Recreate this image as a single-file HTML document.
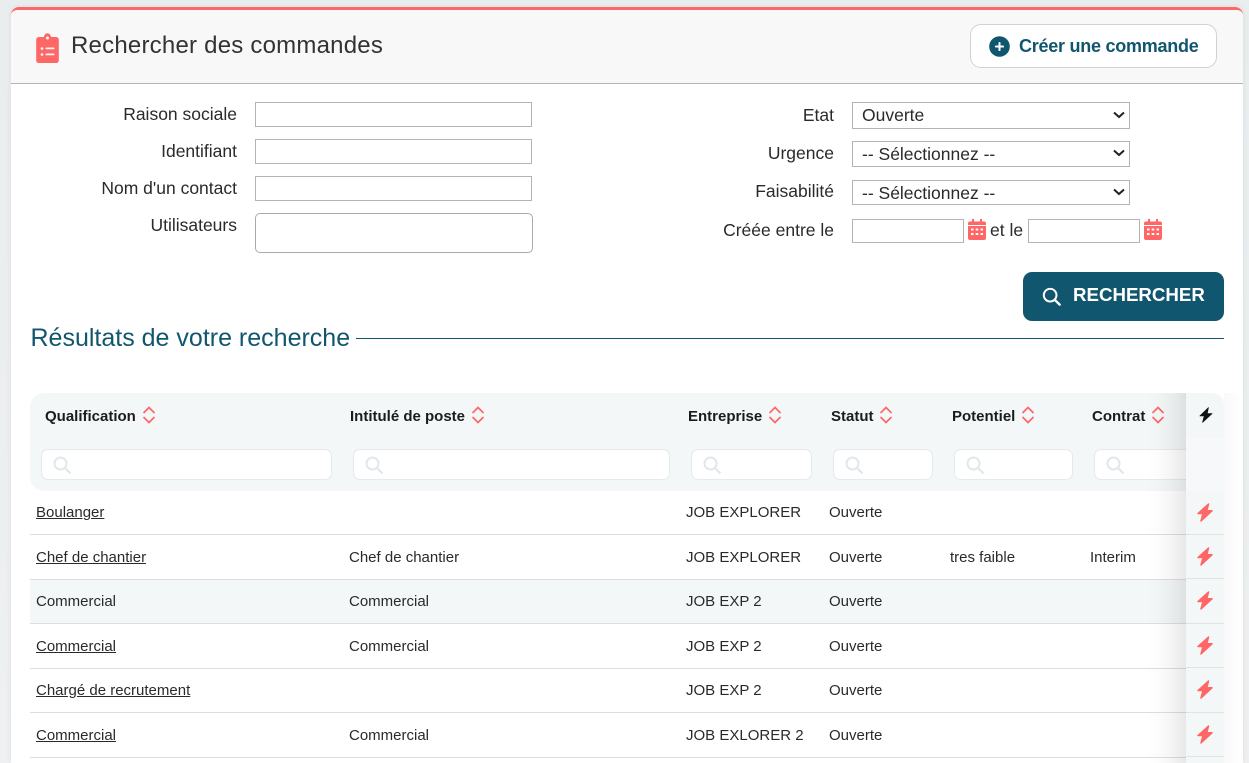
<!DOCTYPE html>
<html lang="fr"><head><meta charset="utf-8"><title>Rechercher des commandes</title>
<style>
*{box-sizing:border-box}
html,body{margin:0;padding:0;width:1249px;height:763px;overflow:hidden;background:#e9edee;font-family:"Liberation Sans",sans-serif;color:#222}
#root{position:relative;width:1249px;height:763px;overflow:hidden;background:linear-gradient(180deg,#e9edee,#eef0f1)}
.a{position:absolute;white-space:nowrap}
#card{position:absolute;left:11px;top:7px;width:1232px;height:756px;background:#fff;border-top:3px solid #ff6666;border-radius:8px 8px 0 0;box-shadow:0 0 6px rgba(0,0,0,.07)}
#head{position:absolute;left:11px;top:10px;width:1232px;height:74px;background:#f8f8f8;border-bottom:1px solid #b5b5b5;border-radius:6px 6px 0 0}
.lb{font-size:17.5px;line-height:20px;text-align:right;right:1012px;color:#2a2a2a}
.lb2{font-size:17.5px;line-height:20px;text-align:right;right:415px;color:#2a2a2a}
.in{position:absolute;background:#fff;border:1px solid #b3b3b3}
.sel{position:absolute;left:852px;width:278px;background:#fff;border:1px solid #b3b3b3;font-size:17.5px;padding-left:9px;color:#2a2a2a}
.sel svg{position:absolute;right:4px;top:50%;margin-top:-5px}
.th{font-size:15px;font-weight:bold;color:#1c1c1c;top:408px;line-height:18px}
.fi{position:absolute;top:449px;height:31px;background:#fff;border:1px solid #e3eaed;border-radius:7px}
.fi svg{position:absolute;left:11px;top:6px}
.td{font-size:15px;line-height:18px;color:#2a2a2a}
.ln{position:absolute;left:30px;width:1156px;height:1px;background:#dedede}
.bolt{position:absolute;left:1197px}
</style></head><body><div id="root">
<div id="card"></div>
<div id="head"></div>

<svg class="a" style="left:36px;top:33px" width="23" height="30" viewBox="0 0 23 30"><path fill="#ff6666" d="M3 4h4.800C8.400 1.700 9.700 .2 11.500 .2S14.600 1.700 15.200 4H20c1.600 0 2.800 1.200 2.800 2.800v20.400c0 1.600-1.200 2.800-2.800 2.800H3c-1.600 0-2.800-1.200-2.800-2.800V6.800C.2 5.200 1.400 4 3 4z"/><circle cx="11.500" cy="5" r="1.500" fill="#f8f8f8"/><g fill="#f8f8f8"><circle cx="6" cy="15.500" r="1.300"/><circle cx="6" cy="21.500" r="1.300"/><rect x="9.500" y="14.500" width="9" height="1.800" rx=".8"/><rect x="9.500" y="20.500" width="9" height="1.800" rx=".8"/></g></svg>
<div class="a" style="left:71px;top:31px;font-size:24px;line-height:30px;color:#333;letter-spacing:.22px">Rechercher des commandes</div>

<div class="a" style="left:970px;top:24px;width:247px;height:44px;background:#fff;border:1px solid #d2d2d2;border-radius:11px"></div>
<svg class="a" style="left:989px;top:36px" width="21" height="21" viewBox="0 0 21 21"><circle cx="10.500" cy="10.500" r="10.300" fill="#11566f"/><rect x="6" y="9.500" width="9" height="2" rx=".8" fill="#fff"/><rect x="9.500" y="6" width="2" height="9" rx=".8" fill="#fff"/></svg>
<div class="a" style="left:1019px;top:35px;font-size:18px;line-height:23px;font-weight:bold;color:#11566f;letter-spacing:-.25px">Créer une commande</div>

<div class="a lb" style="top:104px">Raison sociale</div>
<div class="a lb" style="top:141px">Identifiant</div>
<div class="a lb" style="top:178px">Nom d'un contact</div>
<div class="a lb" style="top:215px">Utilisateurs</div>
<div class="in" style="left:255px;top:102px;width:277px;height:25px"></div>
<div class="in" style="left:255px;top:139px;width:277px;height:25px"></div>
<div class="in" style="left:255px;top:176px;width:277px;height:25px"></div>
<div class="in" style="left:255px;top:213px;width:278px;height:40px;border-radius:5px;border-color:#aaa"></div>

<div class="a lb2" style="top:105px">Etat</div>
<div class="a lb2" style="top:143px">Urgence</div>
<div class="a lb2" style="top:181px">Faisabilité</div>
<div class="a lb2" style="top:220px">Créée entre le</div>

<div class="sel" style="top:102px;height:27px;line-height:24px">Ouverte<svg width="12" height="8" viewBox="0 0 12 8"><path d="M1 1.500l5 4.500 5-4.500" fill="none" stroke="#222" stroke-width="2"/></svg></div>
<div class="sel" style="top:141px;height:26px;line-height:24px">-- Sélectionnez --<svg width="12" height="8" viewBox="0 0 12 8"><path d="M1 1.500l5 4.500 5-4.500" fill="none" stroke="#222" stroke-width="2"/></svg></div>
<div class="sel" style="top:180px;height:25px;line-height:24px">-- Sélectionnez --<svg width="12" height="8" viewBox="0 0 12 8"><path d="M1 1.500l5 4.500 5-4.500" fill="none" stroke="#222" stroke-width="2"/></svg></div>

<div class="in" style="left:852px;top:219px;width:112px;height:24px"></div>
<svg class="a" style="left:968px;top:219px" width="18" height="21" viewBox="0 0 18 21"><path fill="#ff6666" d="M4 0h2v2.500h6V0h2v2.500h2.300c.9 0 1.700.8 1.700 1.700V6H0V4.200c0-.9.800-1.700 1.700-1.700H4z"/><path fill="#ff6666" fill-rule="evenodd" d="M0 7h18v12.300c0 .9-.8 1.700-1.700 1.700H1.700C.8 21 0 20.200 0 19.300zM3 9.500v2h2.500v-2zm4.700 0v2h2.600v-2zm4.800 0v2H15v-2zM3 14v2h2.500v-2zm4.700 0v2h2.600v-2zm4.800 0v2H15v-2z"/></svg>
<div class="a" style="left:990px;top:220px;font-size:17.5px;line-height:20px;color:#2a2a2a">et le</div>
<div class="in" style="left:1028px;top:219px;width:112px;height:24px"></div>
<svg class="a" style="left:1144px;top:219px" width="18" height="21" viewBox="0 0 18 21"><path fill="#ff6666" d="M4 0h2v2.500h6V0h2v2.500h2.300c.9 0 1.700.8 1.700 1.700V6H0V4.200c0-.9.800-1.700 1.700-1.700H4z"/><path fill="#ff6666" fill-rule="evenodd" d="M0 7h18v12.300c0 .9-.8 1.700-1.700 1.700H1.700C.8 21 0 20.200 0 19.300zM3 9.500v2h2.500v-2zm4.700 0v2h2.600v-2zm4.800 0v2H15v-2zM3 14v2h2.500v-2zm4.700 0v2h2.600v-2zm4.800 0v2H15v-2z"/></svg>

<div class="a" style="left:1023px;top:272px;width:201px;height:49px;background:#11566f;border-radius:9px"></div>
<svg class="a" style="left:1042px;top:287px" width="19" height="19" viewBox="0 0 21 21"><circle cx="9" cy="9" r="7" fill="none" stroke="#fff" stroke-width="2.200"/><path d="M14 14l5.500 5.500" stroke="#fff" stroke-width="2.600" stroke-linecap="round"/></svg>
<div class="a" style="left:1073px;top:284px;font-size:18.7px;line-height:22px;font-weight:bold;color:#fff">RECHERCHER</div>

<div class="a" style="left:30.500px;top:323px;font-size:25px;line-height:30px;color:#11566f">Résultats de votre recherche</div>
<div class="a" style="left:356px;top:338px;width:868px;height:1px;background:#11566f"></div>

<!-- table -->
<div class="a" style="left:30px;top:393px;width:1156px;height:98px;background:#f4f7f8;border-radius:14px 0 0 14px"></div>
<div class="a" style="left:30px;top:580px;width:1156px;height:43px;background:#f4f7f8"></div>

<div class="a th" style="left:45px">Qualification</div>
<div class="a th" style="left:350px">Intitulé de poste</div>
<div class="a th" style="left:688px">Entreprise</div>
<div class="a th" style="left:831px">Statut</div>
<div class="a th" style="left:952px">Potentiel</div>
<div class="a th" style="left:1092px">Contrat</div>
<svg class="a" style="left:142px;top:406px" width="14" height="18" viewBox="0 0 14 18"><path d="M1.500 7L7 1.500 12.500 7M1.500 11L7 16.500 12.500 11" fill="none" stroke="#ff6666" stroke-width="1.700"/></svg>
<svg class="a" style="left:471px;top:406px" width="14" height="18" viewBox="0 0 14 18"><path d="M1.500 7L7 1.500 12.500 7M1.500 11L7 16.500 12.500 11" fill="none" stroke="#ff6666" stroke-width="1.700"/></svg>
<svg class="a" style="left:768px;top:406px" width="14" height="18" viewBox="0 0 14 18"><path d="M1.500 7L7 1.500 12.500 7M1.500 11L7 16.500 12.500 11" fill="none" stroke="#ff6666" stroke-width="1.700"/></svg>
<svg class="a" style="left:879px;top:406px" width="14" height="18" viewBox="0 0 14 18"><path d="M1.500 7L7 1.500 12.500 7M1.500 11L7 16.500 12.500 11" fill="none" stroke="#ff6666" stroke-width="1.700"/></svg>
<svg class="a" style="left:1021px;top:406px" width="14" height="18" viewBox="0 0 14 18"><path d="M1.500 7L7 1.500 12.500 7M1.500 11L7 16.500 12.500 11" fill="none" stroke="#ff6666" stroke-width="1.700"/></svg>
<svg class="a" style="left:1151px;top:406px" width="14" height="18" viewBox="0 0 14 18"><path d="M1.500 7L7 1.500 12.500 7M1.500 11L7 16.500 12.500 11" fill="none" stroke="#ff6666" stroke-width="1.700"/></svg>

<div class="fi" style="left:41px;width:291px"><svg width="19" height="19" viewBox="0 0 19 19"><circle cx="7.500" cy="7.500" r="6" fill="none" stroke="#e0e8ea" stroke-width="2"/><path d="M12 12l5.500 5.500" stroke="#e0e8ea" stroke-width="2.200"/></svg></div>
<div class="fi" style="left:353px;width:317px"><svg width="19" height="19" viewBox="0 0 19 19"><circle cx="7.500" cy="7.500" r="6" fill="none" stroke="#e0e8ea" stroke-width="2"/><path d="M12 12l5.500 5.500" stroke="#e0e8ea" stroke-width="2.200"/></svg></div>
<div class="fi" style="left:691px;width:121px"><svg width="19" height="19" viewBox="0 0 19 19"><circle cx="7.500" cy="7.500" r="6" fill="none" stroke="#e0e8ea" stroke-width="2"/><path d="M12 12l5.500 5.500" stroke="#e0e8ea" stroke-width="2.200"/></svg></div>
<div class="fi" style="left:833px;width:100px"><svg width="19" height="19" viewBox="0 0 19 19"><circle cx="7.500" cy="7.500" r="6" fill="none" stroke="#e0e8ea" stroke-width="2"/><path d="M12 12l5.500 5.500" stroke="#e0e8ea" stroke-width="2.200"/></svg></div>
<div class="fi" style="left:954px;width:119px"><svg width="19" height="19" viewBox="0 0 19 19"><circle cx="7.500" cy="7.500" r="6" fill="none" stroke="#e0e8ea" stroke-width="2"/><path d="M12 12l5.500 5.500" stroke="#e0e8ea" stroke-width="2.200"/></svg></div>
<div class="fi" style="left:1094px;width:110px"><svg width="19" height="19" viewBox="0 0 19 19"><circle cx="7.500" cy="7.500" r="6" fill="none" stroke="#e0e8ea" stroke-width="2"/><path d="M12 12l5.500 5.500" stroke="#e0e8ea" stroke-width="2.200"/></svg></div>

<div class="ln" style="top:534px"></div>
<div class="ln" style="top:579px"></div>
<div class="ln" style="top:623px"></div>
<div class="ln" style="top:668px"></div>
<div class="ln" style="top:712px"></div>
<div class="ln" style="top:757px"></div>

<div class="a td" style="left:36px;top:504px"><u>Boulanger</u></div>
<div class="a td" style="left:686px;top:504px">JOB EXPLORER</div>
<div class="a td" style="left:829px;top:504px">Ouverte</div>

<div class="a td" style="left:36px;top:549px"><u>Chef de chantier</u></div>
<div class="a td" style="left:349px;top:549px">Chef de chantier</div>
<div class="a td" style="left:686px;top:549px">JOB EXPLORER</div>
<div class="a td" style="left:829px;top:549px">Ouverte</div>
<div class="a td" style="left:950px;top:549px">tres faible</div>
<div class="a td" style="left:1090px;top:549px">Interim</div>

<div class="a td" style="left:36px;top:593px">Commercial</div>
<div class="a td" style="left:349px;top:593px">Commercial</div>
<div class="a td" style="left:686px;top:593px">JOB EXP 2</div>
<div class="a td" style="left:829px;top:593px">Ouverte</div>

<div class="a td" style="left:36px;top:638px"><u>Commercial</u></div>
<div class="a td" style="left:349px;top:638px">Commercial</div>
<div class="a td" style="left:686px;top:638px">JOB EXP 2</div>
<div class="a td" style="left:829px;top:638px">Ouverte</div>

<div class="a td" style="left:36px;top:682px"><u>Chargé de recrutement</u></div>
<div class="a td" style="left:686px;top:682px">JOB EXP 2</div>
<div class="a td" style="left:829px;top:682px">Ouverte</div>

<div class="a td" style="left:36px;top:727px"><u>Commercial</u></div>
<div class="a td" style="left:349px;top:727px">Commercial</div>
<div class="a td" style="left:686px;top:727px">JOB EXLORER 2</div>
<div class="a td" style="left:829px;top:727px">Ouverte</div>

<!-- sticky column shadows -->
<div class="a" style="left:1146px;top:393px;width:40px;height:370px;background:linear-gradient(90deg,rgba(0,0,0,0),rgba(0,0,0,.012) 30%,rgba(0,0,0,.045) 65%,rgba(0,0,0,.095))"></div>
<div class="a" style="left:1224px;top:393px;width:19px;height:370px;background:linear-gradient(90deg,rgba(0,0,0,.025),rgba(0,0,0,.006) 70%,rgba(0,0,0,0))"></div>
<!-- sticky column -->
<div class="a" style="left:1186px;top:393px;width:38px;height:370px;background:#f4f7f8;border-radius:0 12px 0 0"></div>
<div class="a" style="left:1186px;top:438px;width:38px;height:53px;background:#f6f8f9"></div>
<div class="a" style="left:1186px;top:534px;width:38px;height:1px;background:#e2e2e2"></div>
<div class="a" style="left:1186px;top:578px;width:38px;height:1px;background:#e2e2e2"></div>
<div class="a" style="left:1186px;top:623px;width:38px;height:1px;background:#e2e2e2"></div>
<div class="a" style="left:1186px;top:667px;width:38px;height:1px;background:#e2e2e2"></div>
<div class="a" style="left:1186px;top:712px;width:38px;height:1px;background:#e2e2e2"></div>
<div class="a" style="left:1186px;top:756px;width:38px;height:1px;background:#e2e2e2"></div>

<svg class="a" style="left:1199px;top:407px" width="14" height="16" viewBox="0 0 14 16"><path fill="#111" stroke="#111" stroke-width=".6" stroke-linejoin="round" d="M9.500 .5L.8 9h4.400L3.500 15.500 13.200 6.500H8.300z"/></svg>
<svg class="bolt" style="top:503px" width="16" height="19" viewBox="0 0 16 19"><path fill="#ff6666" stroke="#ff6666" stroke-width="1.500" stroke-linejoin="round" d="M11.500 1L1 10.500h5L4 18 15 7.800H9.800z"/></svg>
<svg class="bolt" style="top:547px" width="16" height="19" viewBox="0 0 16 19"><path fill="#ff6666" stroke="#ff6666" stroke-width="1.500" stroke-linejoin="round" d="M11.500 1L1 10.500h5L4 18 15 7.800H9.800z"/></svg>
<svg class="bolt" style="top:591px" width="16" height="19" viewBox="0 0 16 19"><path fill="#ff6666" stroke="#ff6666" stroke-width="1.500" stroke-linejoin="round" d="M11.500 1L1 10.500h5L4 18 15 7.800H9.800z"/></svg>
<svg class="bolt" style="top:636px" width="16" height="19" viewBox="0 0 16 19"><path fill="#ff6666" stroke="#ff6666" stroke-width="1.500" stroke-linejoin="round" d="M11.500 1L1 10.500h5L4 18 15 7.800H9.800z"/></svg>
<svg class="bolt" style="top:680px" width="16" height="19" viewBox="0 0 16 19"><path fill="#ff6666" stroke="#ff6666" stroke-width="1.500" stroke-linejoin="round" d="M11.500 1L1 10.500h5L4 18 15 7.800H9.800z"/></svg>
<svg class="bolt" style="top:725px" width="16" height="19" viewBox="0 0 16 19"><path fill="#ff6666" stroke="#ff6666" stroke-width="1.500" stroke-linejoin="round" d="M11.500 1L1 10.500h5L4 18 15 7.800H9.800z"/></svg>
</div></body></html>
